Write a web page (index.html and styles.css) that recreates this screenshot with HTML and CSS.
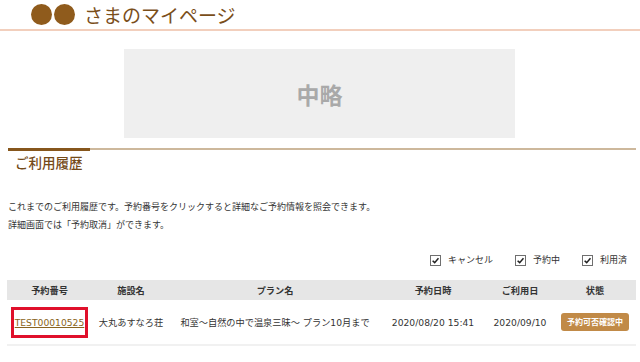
FILE: index.html
```html
<!DOCTYPE html>
<html lang="ja">
<head>
    <meta charset="UTF-8">
    <meta name="viewport" content="width=device-width, initial-scale=1.0">
    <title>マイページ</title>
    <link rel="stylesheet" href="styles.css">
</head>
<body>
    <header class="page-header">
        <span class="dot"></span>
        <span class="dot"></span>
        <h1 class="page-title">さまのマイページ</h1>
    </header>
    <main class="content">
        <div class="omitted">中略</div>

        <section class="history">
            <div class="rule">
                <span class="rule-accent"></span>
                <span class="rule-line"></span>
            </div>
            <h2 class="history-title">ご利用履歴</h2>
            <p class="note">これまでのご利用履歴です。予約番号をクリックすると詳細なご予約情報を照会できます。</p>
            <p class="note">詳細画面では「予約取消」ができます。</p>

            <div class="filters">
                <label class="filter"><span class="check"><svg viewBox="0 0 10 10" width="9" height="9"><path d="M1.8 5.2 L4.1 7.4 L8.3 2.6" fill="none" stroke="#222" stroke-width="1.7"/></svg></span>キャンセル</label>
                <label class="filter"><span class="check"><svg viewBox="0 0 10 10" width="9" height="9"><path d="M1.8 5.2 L4.1 7.4 L8.3 2.6" fill="none" stroke="#222" stroke-width="1.7"/></svg></span>予約中</label>
                <label class="filter"><span class="check"><svg viewBox="0 0 10 10" width="9" height="9"><path d="M1.8 5.2 L4.1 7.4 L8.3 2.6" fill="none" stroke="#222" stroke-width="1.7"/></svg></span>利用済</label>
            </div>

            <table class="history-table">
                <thead>
                    <tr>
                        <th class="col-no">予約番号</th>
                        <th class="col-hotel">施設名</th>
                        <th class="col-plan">プラン名</th>
                        <th class="col-booked">予約日時</th>
                        <th class="col-date">ご利用日</th>
                        <th class="col-status">状態</th>
                    </tr>
                </thead>
                <tbody>
                    <tr>
                        <td><a class="booking-link" href="#">TEST00010525</a></td>
                        <td>大丸あすなろ荘</td>
                        <td>和室〜自然の中で温泉三昧〜 プラン10月まで</td>
                        <td>2020/08/20 15:41</td>
                        <td>2020/09/10</td>
                        <td><span class="badge">予約可否確認中</span></td>
                    </tr>
                </tbody>
            </table>
        </section>
    </main>
</body>
</html>
```

FILE: styles.css
```css
body {
    margin: 0;
    font-family: "Noto Sans CJK JP", "Noto Sans", sans-serif;
    color: #333333;
    background-color: #ffffff;
}
.page-header {
    display: flex;
    align-items: center;
    height: 29px;
    padding-left: 31px;
    border-bottom: 2px solid #f2cfbd; /* ピーチ */
}
.dot {
    width: 21px;
    height: 21px;
    border-radius: 50%;
    background-color: #8f5b1c; /* 茶色 */
    margin-right: 2px;
}
.page-title {
    margin: 0 0 0 7px;
    font-size: 19px;
    font-weight: normal;
    color: #7a4e1a;
}
.content {
    padding: 0 4px 0 7px;
}
.omitted {
    width: 391px;
    height: 89px;
    margin: 18px 0 0 117px;
    background-color: #efefef;
    color: #a9a9a9;
    font-size: 23px;
    font-weight: bold;
    display: flex;
    align-items: center;
    justify-content: center;
}
.history {
    margin-top: 10px;
}
.rule {
    display: flex;
    align-items: flex-start;
    padding-left: 1px;
}
.rule-accent {
    width: 82px;
    height: 3px;
    background-color: #86561c;
}
.rule-line {
    flex: 1;
    height: 2px;
    background-color: #cdb89c;
}
.history-title {
    margin: 1px 0 0 8px;
    font-size: 13.5px;
    line-height: 20px;
    font-weight: 500;
    color: #744a18;
}
.history-title + .note {
    margin-top: 26px;
}
.note {
    margin: 0 0 0 1px;
    font-size: 9px;
    line-height: 18px;
}
.filters {
    display: flex;
    justify-content: flex-end;
    gap: 22px;
    margin-top: 19px;
    padding-right: 9px;
    font-size: 9px;
    line-height: 14px;
}
.filter {
    display: flex;
    align-items: center;
}
.check {
    display: inline-flex;
    align-items: center;
    justify-content: center;
    width: 9px;
    height: 9px;
    border: 1px solid #6f6f6f;
    margin-right: 7px;
    background-color: #ffffff;
}
.history-table {
    width: 100%;
    margin-top: 13px;
    border-collapse: collapse;
    table-layout: fixed;
    font-family: "DejaVu Sans", "Noto Sans CJK JP", sans-serif;
    font-size: 9.2px;
}
.history-table th {
    background-color: #e6e6e6;
    height: 20px;
    font-family: "Noto Sans CJK JP", sans-serif;
    font-weight: bold;
    padding: 0;
}
.history-table td {
    height: 44px;
    padding: 0;
    text-align: center;
    border-bottom: 2px solid #f1f1f1;
}
.col-no { width: 85px; }
.col-hotel { width: 78px; }
.col-plan { width: 210px; }
.col-booked { width: 106px; }
.col-date { width: 68px; }
.booking-link {
    display: inline-block;
    padding: 7px 1px 6px;
    line-height: 12px;
    border: 3px solid #e0102b;
    color: #8a6420;
}
.badge {
    display: inline-block;
    padding: 3px 6px;
    line-height: 12px;
    border-radius: 3px;
    background-color: #c18a47;
    color: #ffffff;
    font-family: "Noto Sans CJK JP", sans-serif;
    font-size: 8px;
    font-weight: bold;
}
```
